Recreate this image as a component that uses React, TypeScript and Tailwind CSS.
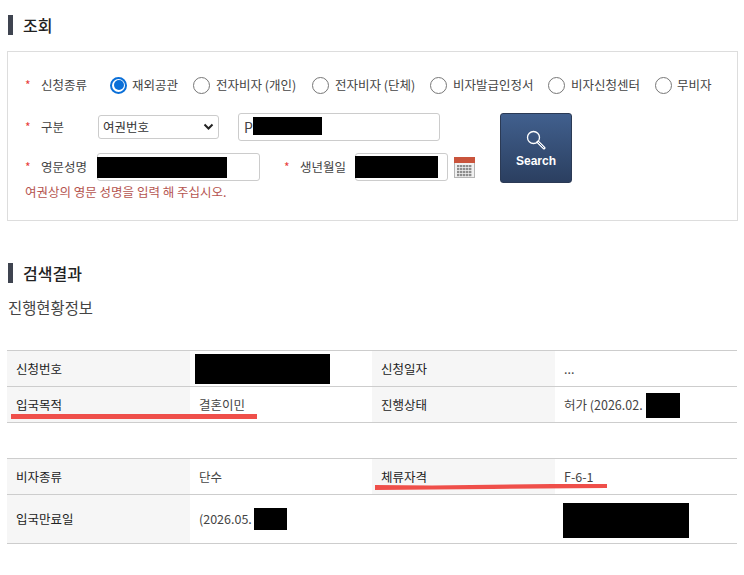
const FONT = "font-['Malgun_Gothic','Noto_Sans_CJK_KR','Noto_Sans',sans-serif]";

const kinds = [
  { label: "재외공관", width: "w-[83px] gap-[5px]", checked: true },
  { label: "전자비자 (개인)", width: "w-[119px] gap-[6px]" },
  { label: "전자비자 (단체)", width: "w-[118px] gap-[6px]" },
  { label: "비자발급인정서", width: "w-[118px] gap-[6px]" },
  { label: "비자신청센터", width: "w-[107px] gap-[6px]" },
  { label: "무비자", width: "w-[70px] gap-[5px]" },
];

function Heading({ title }: { title: string }) {
  return (
    <div className="flex h-[20px] items-center">
      <span className="h-[20px] w-[5px] bg-[#3f4450]" />
      <h2 className="ml-[10px] text-[16px] font-medium leading-[20px] text-[#222]">{title}</h2>
    </div>
  );
}

function Star() {
  return <span className="w-[16px] text-[12px] leading-none text-[#e8403c]">*</span>;
}

function Radio({ checked }: { checked?: boolean }) {
  if (checked) {
    return (
      <span className="flex h-[17px] w-[17px] shrink-0 items-center justify-center rounded-full border-2 border-[#0a6fd8] bg-white">
        <span className="h-[10px] w-[10px] rounded-full bg-[#0a6fd8]" />
      </span>
    );
  }
  return <span className="h-[17px] w-[17px] shrink-0 rounded-full border border-[#777] bg-white" />;
}

function Blackout({ className }: { className: string }) {
  return <span className={`absolute bg-black ${className}`} />;
}

function CalendarIcon() {
  return (
    <svg width="21" height="21" viewBox="0 0 21 21" className="shrink-0">
      <rect x="0.5" y="0.5" width="20" height="20" fill="#f1f1f1" stroke="#b5b5b5" />
      <rect x="0" y="0" width="21" height="6" fill="#c9543c" />
      <g fill="#8d8d8d">
        {[8, 11, 14, 17].map((y) =>
          [3, 6, 9, 12, 15].map((x) => <rect key={`${x}-${y}`} x={x} y={y} width="2.4" height="2.2" />),
        )}
      </g>
    </svg>
  );
}

function Cell({ children, label, className = "" }: { children?: React.ReactNode; label?: boolean; className?: string }) {
  return (
    <div
      className={`relative flex items-center border-b border-[#cdcdcd] pl-[9px] pt-px text-[12.5px] ${
        label ? "bg-[#f6f6f6] text-[#222]" : "text-[#444]"
      } ${className}`}
    >
      {children}
    </div>
  );
}

export default function App() {
  return (
    <div className={`relative h-[575px] w-[744px] overflow-hidden bg-white pl-[7px] pr-[7px] pt-[15px] ${FONT}`}>
      <div className="pl-px">
        <Heading title="조회" />
      </div>

      <div className="relative mt-[16px] h-[170px] w-[731px] border border-[#dddddd] pl-[17px] pt-[24px] text-[12.5px] text-[#444]">
        <div className="flex h-[18px] items-center">
          <Star />
          <span className="w-[69px]">신청종류</span>
          {kinds.map((k) => (
            <div key={k.label} className={`flex items-center ${k.width}`}>
              <Radio checked={k.checked} />
              <span className="whitespace-nowrap">{k.label}</span>
            </div>
          ))}
        </div>

        <div className="mt-[19px] flex items-center">
          <Star />
          <span className="w-[57px]">구분</span>
          <div className="flex h-[24px] w-[121px] items-center justify-between rounded-[3px] border border-[#cccccc] pl-[4px] pr-[4px] text-[#333]">
            <span>여권번호</span>
            <svg width="11" height="8" viewBox="0 0 11 8">
              <path d="M1.5 1.5 5.5 5.5 9.5 1.5" fill="none" stroke="#222" strokeWidth="2" />
            </svg>
          </div>
          <div className="relative ml-[19px] flex h-[28px] w-[202px] items-center rounded-[3px] border border-[#cccccc] pl-[5px] text-[14px] text-[#444]">
            P
            <Blackout className="left-[14px] top-[3px] h-[18px] w-[69px]" />
          </div>
        </div>

        <div className="mt-[12px] flex items-center">
          <Star />
          <span className="w-[56px]">영문성명</span>
          <div className="relative h-[28px] w-[163px] rounded-[3px] border border-[#cccccc]">
            <Blackout className="left-[-1px] top-[3px] h-[21px] w-[130px]" />
          </div>
          <span className="ml-[24px] flex items-center">
            <Star />
            <span className="w-[55px]">생년월일</span>
          </span>
          <div className="relative h-[28px] w-[93px] rounded-[3px] border border-[#cccccc]">
            <Blackout className="left-[-1px] top-[2px] h-[22px] w-[83px]" />
          </div>
          <span className="ml-[6px]">
            <CalendarIcon />
          </span>
        </div>

        <p className="mt-[3px] text-[12.5px] leading-[16px] text-[#b5544f]">여권상의 영문 성명을 입력 해 주십시오.</p>

        <button className="absolute left-[492px] top-[61px] flex h-[70px] w-[72px] flex-col items-center justify-center rounded-[3px] border border-[#2b3a55] bg-gradient-to-b from-[#41608e] to-[#2b3f60] pt-[3px] text-white">
          <svg width="20" height="21" viewBox="0 0 20 21" className="mb-[2px]">
            <circle cx="7.5" cy="7.5" r="6" fill="none" stroke="#fff" strokeWidth="1.3" />
            <path d="M12 12 18 18" stroke="#fff" strokeWidth="3" strokeLinecap="round" />
            <path d="M12.5 12.5 17.5 17.5" stroke="#41608e" strokeWidth="1" strokeLinecap="round" />
          </svg>
          <span className="text-[12px] font-bold leading-[16px] font-['Liberation_Sans',sans-serif]">Search</span>
        </button>
      </div>

      <div className="mt-[42px] pl-px">
        <Heading title="검색결과" />
      </div>
      <h3 className="mt-[13px] pl-px text-[15.4px] leading-[22px] text-[#444]">진행현황정보</h3>

      <div className="mt-[32px] grid w-[730px] grid-cols-[183px_182px_183px_182px] grid-rows-[36px_36px] border-t border-[#cdcdcd]">
        <Cell label>신청번호</Cell>
        <Cell>
          <Blackout className="left-[5px] top-[3px] h-[30px] w-[135px]" />
        </Cell>
        <Cell label>신청일자</Cell>
        <Cell>...</Cell>
        <Cell label>입국목적</Cell>
        <Cell>결혼이민</Cell>
        <Cell label>진행상태</Cell>
        <Cell>
          허가 (2026.02.
          <Blackout className="left-[91px] top-[6px] h-[25px] w-[34px]" />
        </Cell>
      </div>

      <div className="mt-[35px] grid w-[730px] grid-cols-[183px_182px_183px_182px] grid-rows-[36px_49px] border-t border-[#cdcdcd]">
        <Cell label>비자종류</Cell>
        <Cell>단수</Cell>
        <Cell label>체류자격</Cell>
        <Cell>F-6-1</Cell>
        <Cell label>입국만료일</Cell>
        <Cell>
          (2026.05.
          <Blackout className="left-[64px] top-[13px] h-[22px] w-[33px]" />
        </Cell>
        <Cell />
        <Cell>
          <Blackout className="left-[8px] top-[8px] h-[35px] w-[126px]" />
        </Cell>
      </div>

      <span className="absolute left-[11px] top-[414px] h-[5px] w-[246px] bg-[#ef4f4a]" />
      <svg width="240" height="10" viewBox="0 0 240 10" className="absolute left-[372px] top-[482px]">
        <path d="M3 3 60 3.5 180 2 235 2 235 6 120 7 3 8Z" fill="#ef4f4a" />
      </svg>
    </div>
  );
}
